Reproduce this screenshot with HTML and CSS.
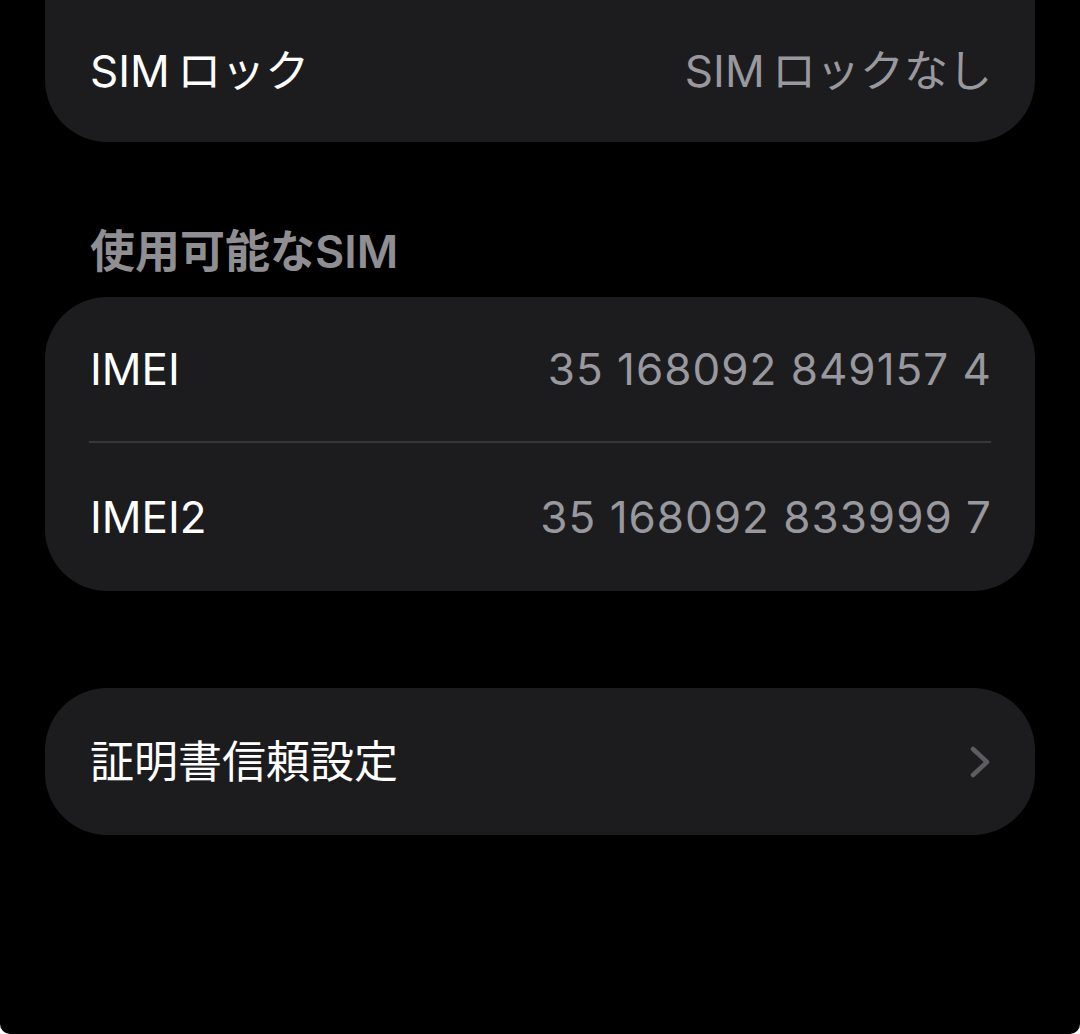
FILE: index.html
```html
<!DOCTYPE html>
<html lang="ja">
<head>
    <meta charset="UTF-8">
    <meta name="viewport" content="width=device-width, initial-scale=1.0">
    <title>情報</title>
    <link rel="stylesheet" href="styles.css">
</head>
<body>
    <div class="screen">
        <div class="group group-top">
            <div class="row row-first jp">
                <span class="label">SIM ロック</span>
                <span class="value">SIM ロックなし</span>
            </div>
        </div>

        <div class="section-title">使用可能なSIM</div>

        <div class="group">
            <div class="row row-imei">
                <span class="label">IMEI</span>
                <span class="value num">35 168092 849157 4</span>
            </div>
            <div class="divider"></div>
            <div class="row row-imei2">
                <span class="label">IMEI2</span>
                <span class="value num">35 168092 833999 7</span>
            </div>
        </div>

        <div class="group group-link">
            <div class="row row-link">
                <span class="label">証明書信頼設定</span>
                <svg class="chevron" width="20" height="32" viewBox="0 0 20 32">
                    <polyline points="3,3 17,16 3,29" fill="none" stroke="#5c5c61" stroke-width="4.5" stroke-linecap="round" stroke-linejoin="round"/>
                </svg>
            </div>
        </div>
    </div>
</body>
</html>
```

FILE: styles.css
```css
html, body {
    margin: 0;
    padding: 0;
    background-color: #fff;
}

body {
    font-family: Inter, "Noto Sans CJK JP", sans-serif;
    color: #fff;
}

.screen {
    background-color: #000;
    height: 1034px;
    box-sizing: border-box;
    padding: 0 45px;
    border-radius: 0 0 10px 10px;
    overflow: hidden;
}

.group {
    background-color: #1c1c1e;
    border-radius: 62px;
}

.group-top {
    border-radius: 0 0 62px 62px;
}

.row {
    display: flex;
    justify-content: space-between;
    align-items: center;
    padding: 0 43px 0 45px;
    font-size: 44px;
    line-height: 1;
}

.row.jp {
    word-spacing: -5px;
}

.row-first {
    height: 142px;
}

.row-imei {
    height: 144px;
}

.row-imei2 {
    height: 148px;
}

.row-link {
    height: 147px;
    padding-right: 45px;
}

.value {
    color: #98989e;
}

.value.num {
    letter-spacing: 1px;
}

.divider {
    height: 2px;
    margin: 0 44px;
    background-color: #38383a;
}

.section-title {
    margin: 85px 0 20px 45px;
    font-size: 45px;
    line-height: 50px;
    font-weight: 600;
    color: #8e8e93;
}

.group-link {
    margin-top: 97px;
}

.chevron {
    display: block;
}
```
